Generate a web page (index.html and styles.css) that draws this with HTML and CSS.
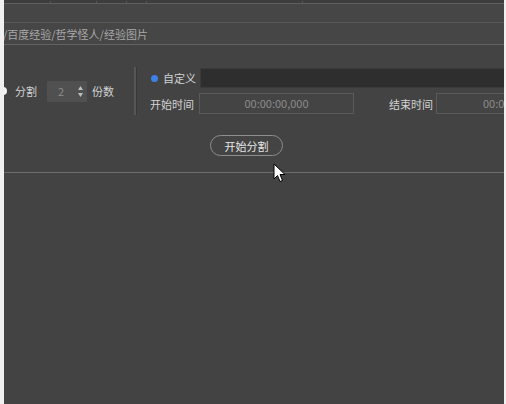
FILE: index.html
```html
<!DOCTYPE html>
<html lang="zh">
<head>
<meta charset="utf-8">
<link rel="stylesheet" href="styles.css">
</head>
<body>
<div class="app">
  <div class="ruler"><span class="tick t1"></span><span class="tick t2"></span><span class="tick t3"></span><span class="tick t4"></span><span class="tick t5"></span></div>
  <div class="band"></div>
  <div class="band path">/百度经验/哲学怪人/经验图片</div>
  <div class="panel">
    <div class="controls">
      <div class="left">
        <span class="radio-white"></span>
        <span class="label">分割</span>
        <div class="spin">
          <span class="spin-val">2</span>
          <span class="spin-arrows">
            <svg width="5" height="4" viewBox="0 0 5 4"><path d="M0 4 L2.5 0 L5 4 Z" fill="#bdbdbd"/></svg>
            <svg width="5" height="4" viewBox="0 0 5 4"><path d="M0 0 L2.5 4 L5 0 Z" fill="#bdbdbd"/></svg>
          </span>
        </div>
        <span class="label">份数</span>
      </div>
      <div class="divider"></div>
      <div class="right">
        <div class="row">
          <span class="radio-blue"></span>
          <span class="label">自定义</span>
          <div class="custom-input"></div>
        </div>
        <div class="row row2">
          <span class="label">开始时间</span>
          <div class="time-input start">00:00:00,000</div>
          <span class="label end-label">结束时间</span>
          <div class="time-input end">00:00:00,000</div>
        </div>
      </div>
    </div>
    <div class="btn-row"><button class="btn">开始分割</button></div>
    <div class="hline"></div>
  </div>
  <svg class="cursor" width="14" height="21" viewBox="0 0 14 21"><path d="M1 1 L1 16 L4.5 12.5 L7 18.5 L9.5 17.5 L7 11.5 L12 11.5 Z" fill="#fff" stroke="#000" stroke-width="1"/></svg>
</div>
</body>
</html>
```

FILE: styles.css
```css
html, body {
  margin: 0;
  padding: 0;
  background: #f0f0f0;
}
.app {
  position: relative;
  margin: 0 2px 0 4px;
  height: 404px;
  background: #434343;
  overflow: hidden;
  font-family: "Noto Sans CJK SC", "Noto Sans", sans-serif;
  font-size: 11px;
  color: #d4d4d4;
}
.ruler {
  position: relative;
  height: 3px;
  background: #3d3d3d;
  border-bottom: 1px solid #5e5e5e;
}
.tick {
  position: absolute;
  top: 1px;
  width: 1px;
  height: 2px;
  background: #555555;
}
.t1 { left: 46px; }
.t2 { left: 92px; }
.t3 { left: 122px; }
.t4 { left: 142px; }
.t5 { left: 298px; }
.band {
  height: 18px;
  background: #464646;
  border-bottom: 1px solid #585858;
}
.path {
  height: 21px;
  line-height: 23px;
  color: #a8a8a8;
  border-bottom: 1px solid #626262;
  margin-left: -1px;
}
.panel {
  padding-top: 22px;
}
.controls {
  display: flex;
  align-items: center;
  height: 48px;
}
.left {
  display: flex;
  align-items: center;
  width: 129px;
}
.radio-white {
  width: 8px;
  height: 8px;
  border-radius: 50%;
  background: #f2f2f2;
  margin-left: -5px;
  margin-right: 8px;
}
.label {
  white-space: nowrap;
  color: #d2d2d2;
}
.spin {
  display: flex;
  align-items: center;
  justify-content: space-between;
  width: 40px;
  height: 21px;
  margin: 0 5px 0 10px;
  background: #505050;
  box-sizing: border-box;
  padding: 0 4px 0 11px;
}
.spin-val {
  color: #8c8c8c;
}
.spin-arrows {
  display: flex;
  flex-direction: column;
  gap: 3px;
}
.spin-arrows svg { display: block; }
.divider {
  width: 2px;
  height: 48px;
  background: #565656;
  border-right: 1px solid #383838;
  margin-left: 1px;
}
.right {
  display: flex;
  flex-direction: column;
  gap: 5px;
  padding-left: 13px;
  flex: 1;
  min-width: 0;
}
.row {
  display: flex;
  align-items: center;
}
.radio-blue {
  width: 7px;
  height: 7px;
  border-radius: 50%;
  background: #3d82e8;
  margin-left: 1px;
  margin-right: 5px;
}
.custom-input {
  flex: 1;
  height: 20px;
  margin-left: 4px;
  background: #2e2e2e;
  border: 1px solid #3a3a3a;
  box-sizing: border-box;
  margin-right: -10px;
}
.time-input {
  height: 21px;
  line-height: 19px;
  box-sizing: border-box;
  border: 1px solid #5a5a5a;
  background: #444444;
  color: #8c8c8c;
  text-align: center;
  flex-shrink: 0;
}
.start {
  width: 155px;
  margin-left: 5px;
}
.end-label {
  margin-left: 35px;
}
.end {
  width: 120px;
  margin-left: 3px;
  text-align: left;
  padding-left: 46px;
}
.btn-row {
  display: flex;
  padding-left: 206px;
  margin-top: 20px;
}
.btn {
  width: 73px;
  height: 21px;
  border-radius: 11px;
  border: 1px solid #8e8e8e;
  background: #444444;
  color: #e6e6e6;
  font-family: inherit;
  font-size: 11px;
  padding: 0;
}
.hline {
  margin-top: 16px;
  height: 1px;
  background: #6c6c6c;
}
.cursor {
  position: absolute;
  left: 269px;
  top: 163px;
}
```
